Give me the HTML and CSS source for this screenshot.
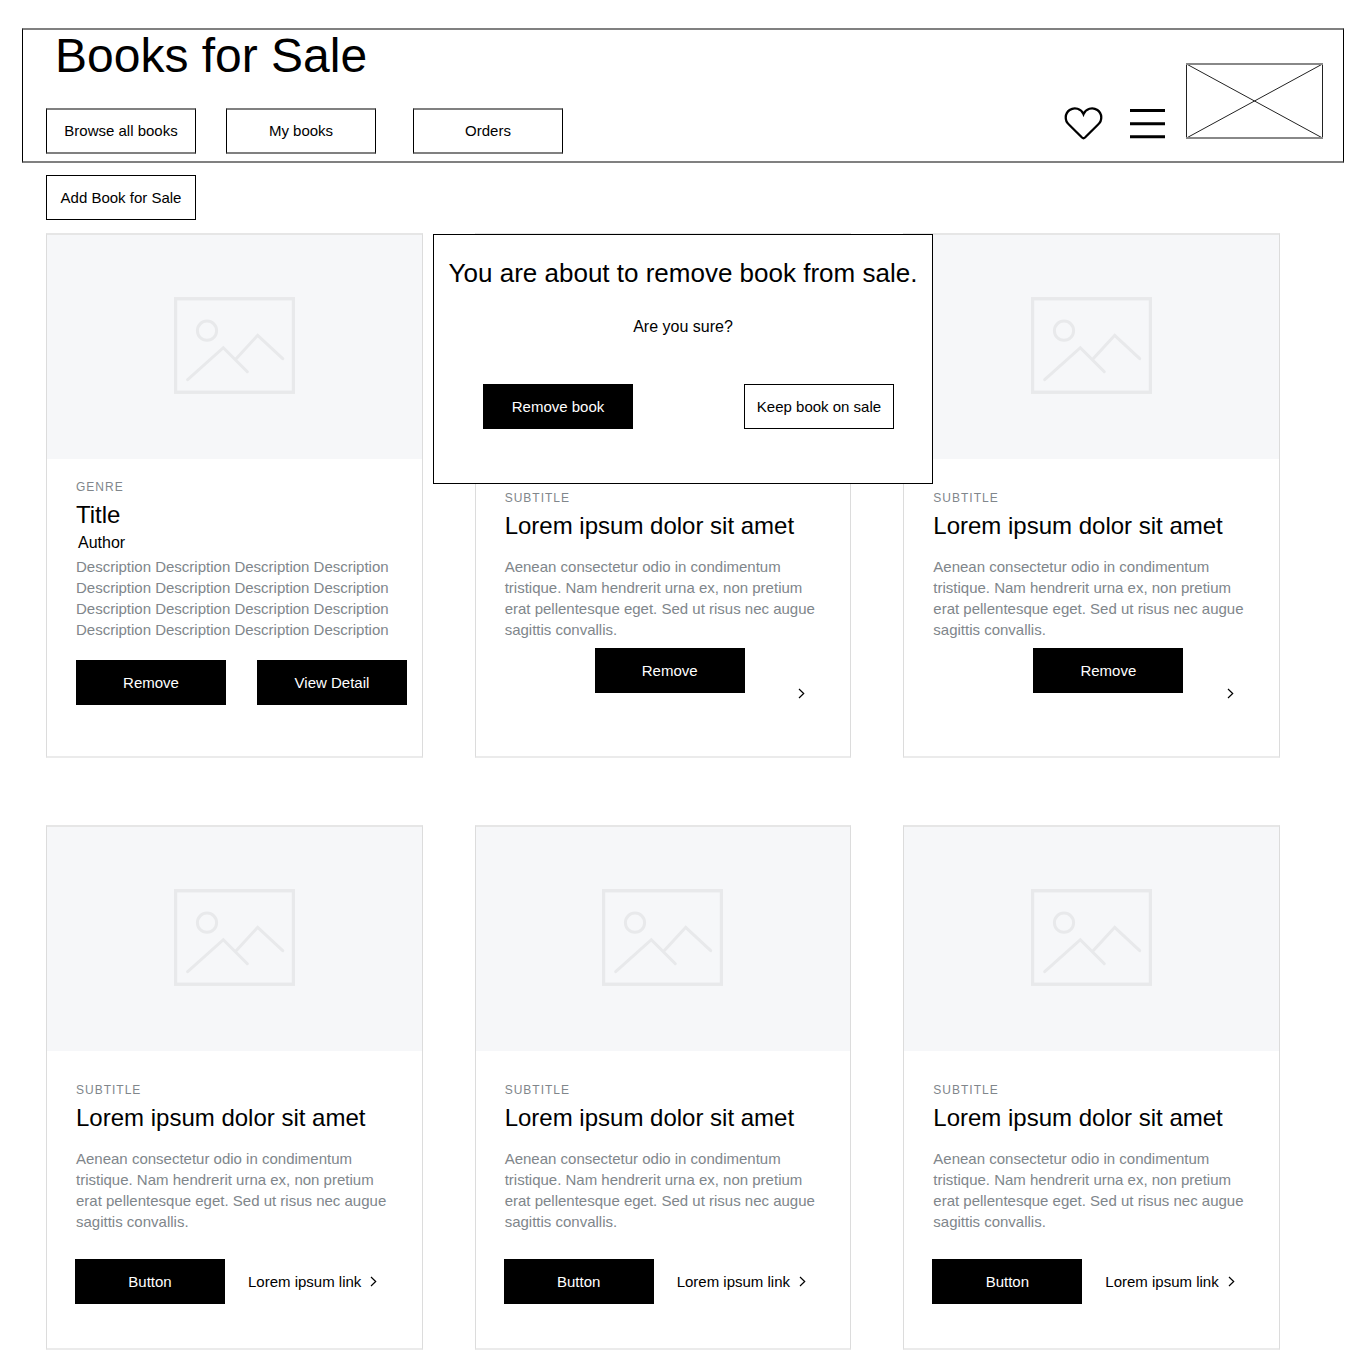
FILE: index.html
```html
<!DOCTYPE html>
<html lang="en">
<head>
<meta charset="utf-8">
<meta name="viewport" content="width=device-width, initial-scale=1">
<title>Books for Sale</title>
<link rel="stylesheet" href="styles.css">
</head>
<body>
<svg class="sprite" aria-hidden="true">
  <symbol id="picture" viewBox="0 0 121 97">
    <g fill="none" stroke="#e8e9eb" stroke-width="3" stroke-linejoin="miter">
      <rect x="1.5" y="1.75" width="118" height="93.5" stroke-width="3.4"/>
      <circle cx="33" cy="33.7" r="9.6"/>
      <path d="M13.7 82.7 49.3 50.7 73.3 74.7M61.7 62.3 83.7 38.3 108.7 61.7" stroke-linecap="round"/>
    </g>
  </symbol>
  <symbol id="chevron" viewBox="0 0 7 11">
    <path d="M1 1 5.7 5.5 1 10" fill="none" stroke="#000" stroke-width="1.2"/>
  </symbol>
</svg>

<header class="header">
  <div class="header-main">
    <h1 class="page-title">Books for Sale</h1>
    <nav class="nav">
      <div class="nav-books">
        <button class="btn btn-nav" type="button">Browse all books</button>
        <button class="btn btn-nav" type="button">My books</button>
      </div>
      <button class="btn btn-nav" type="button">Orders</button>
    </nav>
  </div>
  <div class="header-tools">
    <button class="icon-btn" type="button" aria-label="Favourites">
      <svg width="38" height="33" viewBox="0 -1 38 33"><path d="M18.5 7.2A9.2 9.2 0 1 0 3.9 17.5L17 30.5q1.5 1.4 3 0L33.1 17.5A9.2 9.2 0 1 0 18.5 7.2z" fill="none" stroke="#000" stroke-width="2.3"/></svg>
    </button>
    <button class="icon-btn" type="button" aria-label="Menu">
      <svg width="35" height="30" viewBox="0 0 35 30"><path d="M0 1.5h35M0 14.7h35M0 27.7h35" stroke="#000" stroke-width="3"/></svg>
    </button>
    <svg class="logo" width="137" height="76" viewBox="0 0 137 76" role="img" aria-label="Logo"><path d="M.5 1v74M136.5 1v74M.5 1l136 74M136.5 1 .5 75" fill="none" stroke="#222"/><path d="M0 1h137M0 75h137" stroke="#888" stroke-width="2"/></svg>
  </div>
</header>

<main class="main">
  <button class="btn" type="button">Add Book for Sale</button>

  <div class="cards">
    <article class="card">
      <div class="media"><svg class="picture"><use href="#picture"/></svg></div>
      <div class="body body-book">
        <p class="subtitle">GENRE</p>
        <h2 class="title">Title</h2>
        <p class="author">Author</p>
        <p class="text">Description Description Description Description Description Description Description Description Description Description Description Description Description Description Description Description</p>
        <div class="actions actions-pair">
          <button class="btn btn-solid" type="button">Remove</button>
          <button class="btn btn-solid" type="button">View Detail</button>
        </div>
      </div>
    </article>

    <article class="card">
      <div class="media"><svg class="picture"><use href="#picture"/></svg></div>
      <div class="body">
        <p class="subtitle">SUBTITLE</p>
        <h2 class="title">Lorem ipsum dolor sit amet</h2>
        <p class="text">Aenean consectetur odio in condimentum tristique. Nam hendrerit urna ex, non pretium erat pellentesque eget. Sed ut risus nec augue sagittis convallis.</p>
        <div class="actions actions-remove">
          <button class="btn btn-solid" type="button">Remove</button>
          <a class="link" href="#" aria-label="Details"><svg class="chevron"><use href="#chevron"/></svg></a>
        </div>
      </div>
    </article>

    <article class="card">
      <div class="media"><svg class="picture"><use href="#picture"/></svg></div>
      <div class="body">
        <p class="subtitle">SUBTITLE</p>
        <h2 class="title">Lorem ipsum dolor sit amet</h2>
        <p class="text">Aenean consectetur odio in condimentum tristique. Nam hendrerit urna ex, non pretium erat pellentesque eget. Sed ut risus nec augue sagittis convallis.</p>
        <div class="actions actions-remove actions-shifted">
          <button class="btn btn-solid" type="button">Remove</button>
          <a class="link" href="#" aria-label="Details"><svg class="chevron"><use href="#chevron"/></svg></a>
        </div>
      </div>
    </article>

    <article class="card">
      <div class="media"><svg class="picture"><use href="#picture"/></svg></div>
      <div class="body">
        <p class="subtitle">SUBTITLE</p>
        <h2 class="title">Lorem ipsum dolor sit amet</h2>
        <p class="text">Aenean consectetur odio in condimentum tristique. Nam hendrerit urna ex, non pretium erat pellentesque eget. Sed ut risus nec augue sagittis convallis.</p>
        <div class="actions actions-link">
          <button class="btn btn-solid" type="button">Button</button>
          <a class="link" href="#">Lorem ipsum link <svg class="chevron"><use href="#chevron"/></svg></a>
        </div>
      </div>
    </article>

    <article class="card">
      <div class="media"><svg class="picture"><use href="#picture"/></svg></div>
      <div class="body">
        <p class="subtitle">SUBTITLE</p>
        <h2 class="title">Lorem ipsum dolor sit amet</h2>
        <p class="text">Aenean consectetur odio in condimentum tristique. Nam hendrerit urna ex, non pretium erat pellentesque eget. Sed ut risus nec augue sagittis convallis.</p>
        <div class="actions actions-link">
          <button class="btn btn-solid" type="button">Button</button>
          <a class="link" href="#">Lorem ipsum link <svg class="chevron"><use href="#chevron"/></svg></a>
        </div>
      </div>
    </article>

    <article class="card">
      <div class="media"><svg class="picture"><use href="#picture"/></svg></div>
      <div class="body">
        <p class="subtitle">SUBTITLE</p>
        <h2 class="title">Lorem ipsum dolor sit amet</h2>
        <p class="text">Aenean consectetur odio in condimentum tristique. Nam hendrerit urna ex, non pretium erat pellentesque eget. Sed ut risus nec augue sagittis convallis.</p>
        <div class="actions actions-link">
          <button class="btn btn-solid" type="button">Button</button>
          <a class="link" href="#">Lorem ipsum link <svg class="chevron"><use href="#chevron"/></svg></a>
        </div>
      </div>
    </article>
  </div>
</main>

<dialog class="dialog" open aria-labelledby="dialog-title">
  <h2 class="dialog-title" id="dialog-title">You are about to remove book from sale.</h2>
  <p class="dialog-text">Are you sure?</p>
  <div class="dialog-actions">
    <button class="btn btn-solid" type="button">Remove book</button>
    <button class="btn" type="button">Keep book on sale</button>
  </div>
</dialog>
</body>
</html>
```
FILE: styles.css
```css
* {
  box-sizing: border-box;
}

body {
  position: relative;
  margin: 0;
  padding-top: 28px;
  background: #fff;
  color: #000;
  font-family: "Liberation Sans", Arial, sans-serif;
  font-size: 15px;
}

h1,
h2,
p {
  margin: 0;
  font-weight: 400;
}

.sprite {
  position: absolute;
  width: 0;
  height: 0;
}

/* Controls */
.btn {
  flex: none;
  width: 150px;
  height: 45px;
  padding: 0;
  border: 1px solid #000;
  border-radius: 0;
  background: #fff;
  color: #000;
  font: inherit;
  white-space: nowrap;
}

.btn-nav {
  height: 46px;
  padding-bottom: 2px;
  border-width: 2px 1px;
  border-color: #808080 #000;
}

.btn-solid {
  background: #000;
  color: #fff;
}

.icon-btn {
  display: block;
  padding: 0;
  border: 0;
  background: none;
}

.icon-btn svg,
.logo {
  display: block;
  overflow: visible;
}

.link {
  display: flex;
  align-items: center;
  gap: 9px;
  color: #000;
  line-height: 20px;
  text-decoration: none;
  white-space: nowrap;
}

.chevron {
  display: block;
  width: 7px;
  height: 11px;
}

/* Header */
.header {
  display: flex;
  justify-content: space-between;
  align-items: flex-end;
  margin: 0 22px;
  padding: 0 20px 7px 23px;
  border: solid;
  border-width: 2px 1px;
  border-color: #808080 #000;
}

.page-title {
  padding-left: 9px;
  font-size: 48px;
  line-height: 52px;
}

.nav {
  display: flex;
  gap: 37px;
  margin-top: 26px;
}

.nav-books {
  display: flex;
  gap: 30px;
}

.header-tools {
  display: flex;
  align-items: flex-end;
  gap: 21px;
  padding-bottom: 15px;
}

.icon-btn:first-child {
  margin-right: 6px;
}

/* Book cards */
.main {
  padding: 12px 86px 0 46px;
}

.main > .btn {
  display: block;
}

.cards {
  display: grid;
  grid-template-columns: repeat(3, minmax(0, 1fr));
  gap: 67px 52px;
  margin-top: 13px;
}

.card {
  min-height: 525px;
  border: solid;
  border-width: 2px 1px;
  border-color: #e6e6e6 #dcdcdc #ebebeb;
}

.media {
  display: flex;
  justify-content: center;
  align-items: center;
  height: 224px;
  padding-bottom: 3px;
  background: #f6f7f9;
}

.picture {
  width: 121px;
  height: 97px;
}

.body {
  padding: 30px 15px 0 29px;
}

.subtitle {
  color: #80868b;
  font-size: 12px;
  line-height: 18px;
  letter-spacing: 1px;
}

.title {
  margin-top: 5px;
  font-size: 24px;
  line-height: 28px;
}

.text {
  margin-top: 16px;
  padding-right: 14px;
  color: #80868b;
  line-height: 21px;
}

.body-book {
  padding-top: 19px;
}

.author {
  margin-top: 5px;
  padding-left: 2px;
  font-size: 16px;
  line-height: 18px;
}

.author + .text {
  margin-top: 4px;
}

.actions {
  display: flex;
}

.actions-pair {
  gap: 31px;
  margin-top: 20px;
}

.actions-remove {
  justify-content: space-between;
  height: 51px;
  margin-top: 8px;
  padding: 0 30px 0 90px;
}

.actions-remove .link {
  align-self: flex-end;
  line-height: 11px;
}

.actions-shifted {
  padding-left: 100px;
}

.actions-link {
  align-items: center;
  gap: 23px;
  margin: 27px 0 0 -1px;
}

/* Removal confirmation */
.dialog {
  position: absolute;
  top: 234px;
  right: 0;
  left: 0;
  width: 500px;
  max-width: 100%;
  height: 250px;
  margin: 0 auto;
  padding: 23px 38px 0 49px;
  border: 1px solid #000;
  background: #fff;
  color: #000;
}

.dialog-title,
.dialog-text {
  margin: 0 -38px 0 -49px;
  text-align: center;
}

.dialog-title {
  font-size: 26px;
  line-height: 30px;
}

.dialog-text {
  margin-top: 29px;
  font-size: 16px;
  line-height: 20px;
}

.dialog-actions {
  display: flex;
  justify-content: space-between;
  margin-top: 47px;
}
```
